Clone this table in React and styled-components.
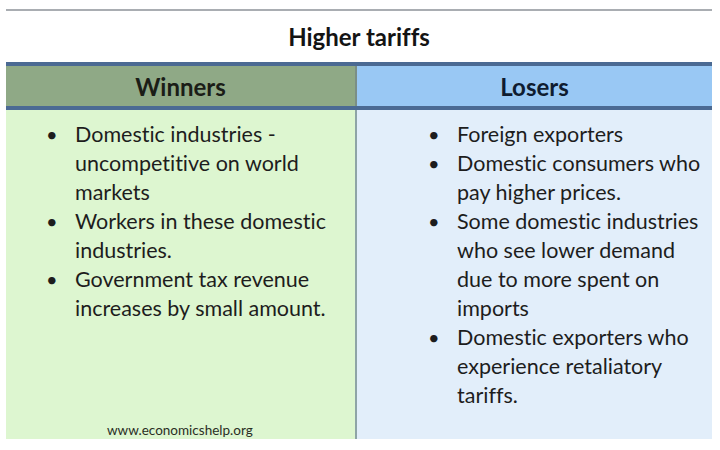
import React from 'react'
import styled, { createGlobalStyle } from 'styled-components'

const Global = createGlobalStyle`
  html, body { margin: 0; padding: 0; background: #fff; }
  body {
    font-family: Lato, "Open Sans", sans-serif;
    color: #1a1a1a;
    font-variant-ligatures: no-common-ligatures no-discretionary-ligatures;
    font-feature-settings: "liga" 0, "dlig" 0;
  }
`

const winners = [
  'Domestic industries - uncompetitive on world markets',
  'Workers in these domestic industries.',
  'Government tax revenue increases by small amount.',
]

const losers = [
  'Foreign exporters',
  'Domestic consumers who pay higher prices.',
  'Some domestic industries who see lower demand due to more spent on imports',
  'Domestic exporters who experience retaliatory tariffs.',
]

function Bullets({ items }) {
  return (
    <List>
      {items.map((t) => (
        <Item key={t}>
          <Dot>•</Dot>
          <span>{t}</span>
        </Item>
      ))}
    </List>
  )
}

export default function App() {
  return (
    <Page>
      <Global />
      <Rule />
      <Title>Higher tariffs</Title>
      <HeadRow>
        <HeadCell side="left">Winners</HeadCell>
        <HeadCell side="right">Losers</HeadCell>
      </HeadRow>
      <BodyRow>
        <BodyCell side="left">
          <Bullets items={winners} />
          <Footer>www.economicshelp.org</Footer>
        </BodyCell>
        <BodyCell side="right">
          <Bullets items={losers} />
        </BodyCell>
      </BodyRow>
    </Page>
  )
}

const Page = styled.div`
  width: 720px;
  height: 450px;
  padding: 9px 8px 0 6px;
  box-sizing: border-box;
  display: flex;
  flex-direction: column;
`

const Rule = styled.div`
  height: 2px;
  background: #a9adb2;
`

const Title = styled.h1`
  margin: 0;
  height: 51px;
  display: flex;
  align-items: center;
  justify-content: center;
  font-size: 24px;
  font-weight: 700;
  color: #141414;
`

const HeadRow = styled.div`
  display: grid;
  grid-template-columns: 351px 1fr;
  border-top: 4px solid #4b6a93;
  border-bottom: 4px solid #4b6a93;
`

const HeadCell = styled.div`
  height: 40px;
  display: flex;
  align-items: center;
  justify-content: center;
  font-size: 24px;
  font-weight: 700;
  color: ${(p) => (p.side === 'left' ? '#1b1d17' : '#0f1c30')};
  background: ${(p) => (p.side === 'left' ? '#8fa986' : '#99c8f4')};
  border-right: ${(p) => (p.side === 'left' ? '2px solid #7b8f86' : 'none')};
`

const BodyRow = styled.div`
  display: grid;
  grid-template-columns: 351px 1fr;
  height: 329px;
`

const BodyCell = styled.div`
  background: ${(p) => (p.side === 'left' ? '#ddf6d0' : '#e2eefa')};
  border-right: ${(p) => (p.side === 'left' ? '2px solid #8ea4a6' : 'none')};
  padding: ${(p) => (p.side === 'left' ? '10px 8px 0 40px' : '10px 0 0 71px')};
  display: flex;
  flex-direction: column;
`

const List = styled.ul`
  list-style: none;
  margin: 0;
  padding: 0;
  font-size: 21.5px;
  line-height: 29px;
  color: #1d1d1d;
  flex: 1;
`

const Item = styled.li`
  display: grid;
  grid-template-columns: 29px 1fr;
`

const Dot = styled.span`
  font-size: 20px;
`

const Footer = styled.div`
  font-size: 13.5px;
  color: #2a2e25;
  padding: 0 0 1px 61px;
`
